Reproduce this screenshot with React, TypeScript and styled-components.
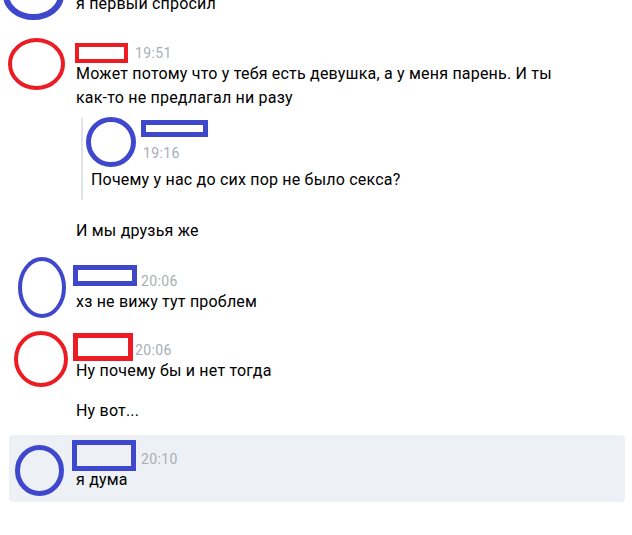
import React from 'react';
import styled, { createGlobalStyle, css } from 'styled-components';

const RED = '#ED1C24';
const BLUE = '#3F48CC';

const GlobalStyle = createGlobalStyle`
  html, body { margin: 0; padding: 0; background: #ffffff; }
  body {
    font-family: Roboto, "Noto Sans", "Liberation Sans", Arial, sans-serif;
    color: #000000;
    -webkit-font-smoothing: antialiased;
  }
`;

const Page = styled.div`
  width: 632px;
  height: 535px;
  overflow: hidden;
`;

const Feed = styled.div`
  display: flex;
  flex-direction: column;
  margin-top: -8px;
`;

const Message = styled.div<{ $pt: number; $highlight?: boolean }>`
  display: grid;
  grid-template-columns: ${(p) => (p.$highlight ? 67 : 76)}px 1fr;
  padding-top: ${(p) => p.$pt}px;
  ${(p) =>
    p.$highlight &&
    css`
      background: #edf0f5;
      border-radius: 4px;
      margin: 12px 7px 0 9px;
      padding-bottom: 10px;
    `}
`;

const AvatarSlot = styled.div`
  height: 0;
  overflow: visible;
`;

const RingSvg = styled.svg<{ $ml: number; $mt: number }>`
  display: block;
  margin-left: ${(p) => p.$ml}px;
  margin-top: ${(p) => p.$mt}px;
  flex-shrink: 0;
`;

type RingProps = { w: number; h: number; sw: number; color: string; ml?: number; mt?: number };

const Ring = ({ w, h, sw, color, ml = 0, mt = 0 }: RingProps) => (
  <RingSvg $ml={ml} $mt={mt} width={w} height={h} viewBox={`0 0 ${w} ${h}`}>
    <ellipse
      cx={w / 2}
      cy={h / 2}
      rx={w / 2 - sw / 2}
      ry={h / 2 - sw / 2}
      fill="none"
      stroke={color}
      strokeWidth={sw}
    />
  </RingSvg>
);

const Body = styled.div`
  display: flex;
  flex-direction: column;
  min-width: 0;
`;

const Header = styled.div`
  display: flex;
  align-items: center;
  height: 18px;
  line-height: 18px;
`;

const NameSlot = styled.span<{ $w: number }>`
  position: relative;
  display: inline-block;
  width: ${(p) => p.$w}px;
  height: 18px;
`;

const Censor = styled.span<{ $l: number; $t: number; $w: number; $h: number; $sw: number; $c: string }>`
  position: absolute;
  left: ${(p) => p.$l}px;
  top: ${(p) => p.$t}px;
  width: ${(p) => p.$w}px;
  height: ${(p) => p.$h}px;
  border: ${(p) => p.$sw}px solid ${(p) => p.$c};
  box-sizing: border-box;
  background: transparent;
`;

const Time = styled.span<{ $ml?: number; $mt?: number }>`
  font-size: 14px;
  letter-spacing: 0.4px;
  line-height: 18px;
  color: #a9aeb5;
  margin-left: ${(p) => p.$ml ?? 0}px;
  margin-top: ${(p) => p.$mt ?? 0}px;
`;

const Text = styled.div<{ $mt?: number; $pl?: number }>`
  font-size: 16px;
  letter-spacing: 0.2px;
  line-height: 24px;
  margin-top: ${(p) => p.$mt ?? 0}px;
  padding-left: ${(p) => p.$pl ?? 0}px;
  max-width: 500px;
`;

const Quote = styled.div`
  margin: 8px 0 0 5px;
  border-left: 2px solid #dfe3e8;
  padding: 0 0 8px 3px;
  display: flex;
  flex-direction: column;
`;

const QuoteHead = styled.div`
  display: flex;
  align-items: flex-start;
`;

const QuoteMeta = styled.div`
  display: flex;
  flex-direction: column;
  margin-left: 5px;
`;

const QuoteName = styled.span<{ $w: number; $h: number; $sw: number; $c: string }>`
  display: block;
  width: ${(p) => p.$w}px;
  height: ${(p) => p.$h}px;
  border: ${(p) => p.$sw}px solid ${(p) => p.$c};
  box-sizing: border-box;
  margin-top: 2px;
`;

type Box = { l: number; t: number; w: number; h: number; sw: number; c: string };

const Head = ({ slot, box, time }: { slot: number; box: Box; time: string }) => (
  <Header>
    <NameSlot $w={slot}>
      <Censor $l={box.l} $t={box.t} $w={box.w} $h={box.h} $sw={box.sw} $c={box.c} />
    </NameSlot>
    <Time>{time}</Time>
  </Header>
);

export default function App() {
  return (
    <Page>
      <GlobalStyle />
      <Feed>
        <Message $pt={0}>
          <AvatarSlot>
            <Ring w={61} h={50} sw={6} color={BLUE} ml={3} mt={-22} />
          </AvatarSlot>
          <Body>
            <Text>я первый спросил</Text>
          </Body>
        </Message>

        <Message $pt={28}>
          <AvatarSlot>
            <Ring w={57} h={52} sw={4} color={RED} ml={8} mt={-6} />
          </AvatarSlot>
          <Body>
            <Head slot={59} time="19:51" box={{ l: -1, t: -1, w: 53, h: 20, sw: 4, c: RED }} />
            <Text>
              Может потому что у тебя есть девушка, а у меня парень. И ты как-то не предлагал ни разу
            </Text>
            <Quote>
              <QuoteHead>
                <Ring w={50} h={50} sw={5} color={BLUE} mt={-1} />
                <QuoteMeta>
                  <QuoteName $w={67} $h={17} $sw={5} $c={BLUE} />
                  <Time $ml={2} $mt={7}>
                    19:16
                  </Time>
                </QuoteMeta>
              </QuoteHead>
              <Text $mt={1} $pl={5}>
                Почему у нас до сих пор не было секса?
              </Text>
            </Quote>
            <Text $mt={19}>И мы друзья же</Text>
          </Body>
        </Message>

        <Message $pt={29}>
          <AvatarSlot>
            <Ring w={48} h={61} sw={4} color={BLUE} ml={18} mt={-15} />
          </AvatarSlot>
          <Body>
            <Head slot={65} time="20:06" box={{ l: -3, t: -7, w: 64, h: 21, sw: 5, c: BLUE }} />
            <Text>хз не вижу тут проблем</Text>
          </Body>
        </Message>

        <Message $pt={27}>
          <AvatarSlot>
            <Ring w={54} h={56} sw={4} color={RED} ml={14} mt={-10} />
          </AvatarSlot>
          <Body>
            <Head slot={59} time="20:06" box={{ l: -3, t: -8, w: 60, h: 28, sw: 5, c: RED }} />
            <Text>Ну почему бы и нет тогда</Text>
            <Text $mt={16}>Ну вот...</Text>
          </Body>
        </Message>

        <Message $pt={15} $highlight>
          <AvatarSlot>
            <Ring w={49} h={51} sw={5} color={BLUE} ml={6} mt={-5} />
          </AvatarSlot>
          <Body>
            <Head slot={65} time="20:10" box={{ l: -4, t: -10, w: 64, h: 31, sw: 5, c: BLUE }} />
            <Text>я дума</Text>
          </Body>
        </Message>
      </Feed>
    </Page>
  );
}
